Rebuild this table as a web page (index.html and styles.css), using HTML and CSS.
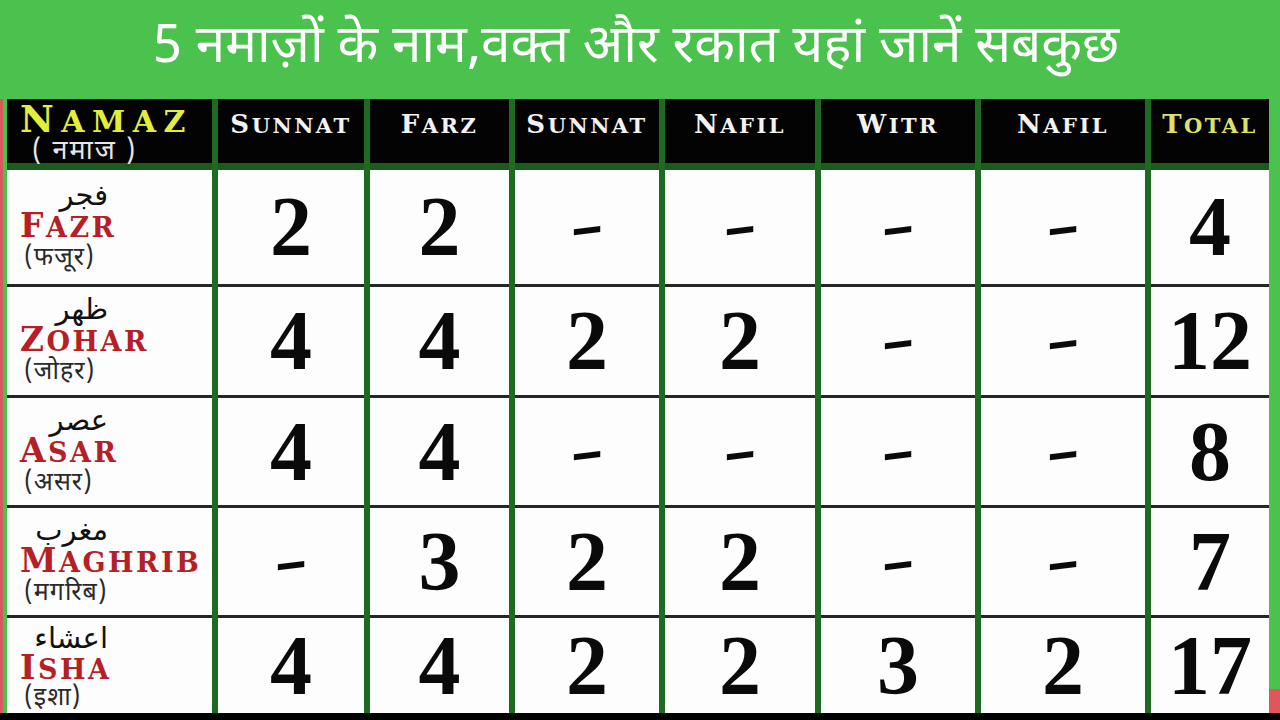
FILE: index.html
```html
<!DOCTYPE html>
<html lang="hi">
<head>
<meta charset="utf-8">
<title>5 नमाज़ों के नाम</title>
<link rel="stylesheet" href="styles.css">
</head>
<body>
<div class="page">
  <header class="title">
    <h1>5 नमाज़ों के नाम,वक्त और रकात यहां जानें सबकुछ</h1>
  </header>
  <div class="board">
    <div class="strip-left"></div>
    <div class="grid">
      <div class="hcell hname">
        <span class="namaz"><span class="cap">N</span>AMAZ</span>
        <span class="namaz-hi">( नमाज )</span>
      </div>
      <div class="hcell"><span class="htext"><span class="cap">S</span>UNNAT</span></div>
      <div class="hcell"><span class="htext"><span class="cap">F</span>ARZ</span></div>
      <div class="hcell"><span class="htext"><span class="cap">S</span>UNNAT</span></div>
      <div class="hcell"><span class="htext"><span class="cap">N</span>AFIL</span></div>
      <div class="hcell"><span class="htext"><span class="cap">W</span>ITR</span></div>
      <div class="hcell"><span class="htext"><span class="cap">N</span>AFIL</span></div>
      <div class="hcell"><span class="htext total"><span class="cap">T</span>OTAL</span></div>

      <div class="cell name">
        <span class="ar" lang="ar">فجر</span>
        <span class="en"><span class="cap">F</span>AZR</span>
        <span class="hi">(फजूर)</span>
      </div>
      <div class="cell"><span class="num">2</span></div>
      <div class="cell"><span class="num">2</span></div>
      <div class="cell"><span class="dash">–</span></div>
      <div class="cell"><span class="dash">–</span></div>
      <div class="cell"><span class="dash">–</span></div>
      <div class="cell"><span class="dash">–</span></div>
      <div class="cell"><span class="num">4</span></div>

      <div class="cell name">
        <span class="ar" lang="ar">ظهر</span>
        <span class="en"><span class="cap">Z</span>OHAR</span>
        <span class="hi">(जोहर)</span>
      </div>
      <div class="cell"><span class="num">4</span></div>
      <div class="cell"><span class="num">4</span></div>
      <div class="cell"><span class="num">2</span></div>
      <div class="cell"><span class="num">2</span></div>
      <div class="cell"><span class="dash">–</span></div>
      <div class="cell"><span class="dash">–</span></div>
      <div class="cell"><span class="num">12</span></div>

      <div class="cell name">
        <span class="ar" lang="ar">عصر</span>
        <span class="en"><span class="cap">A</span>SAR</span>
        <span class="hi">(असर)</span>
      </div>
      <div class="cell"><span class="num">4</span></div>
      <div class="cell"><span class="num">4</span></div>
      <div class="cell"><span class="dash">–</span></div>
      <div class="cell"><span class="dash">–</span></div>
      <div class="cell"><span class="dash">–</span></div>
      <div class="cell"><span class="dash">–</span></div>
      <div class="cell"><span class="num">8</span></div>

      <div class="cell name">
        <span class="ar" lang="ar">مغرب</span>
        <span class="en"><span class="cap">M</span>AGHRIB</span>
        <span class="hi">(मगरिब)</span>
      </div>
      <div class="cell"><span class="dash">–</span></div>
      <div class="cell"><span class="num">3</span></div>
      <div class="cell"><span class="num">2</span></div>
      <div class="cell"><span class="num">2</span></div>
      <div class="cell"><span class="dash">–</span></div>
      <div class="cell"><span class="dash">–</span></div>
      <div class="cell"><span class="num">7</span></div>

      <div class="cell name last">
        <span class="ar" lang="ar">اعشاء</span>
        <span class="en"><span class="cap">I</span>SHA</span>
        <span class="hi">(इशा)</span>
      </div>
      <div class="cell last"><span class="num">4</span></div>
      <div class="cell last"><span class="num">4</span></div>
      <div class="cell last"><span class="num">2</span></div>
      <div class="cell last"><span class="num">2</span></div>
      <div class="cell last"><span class="num">3</span></div>
      <div class="cell last"><span class="num">2</span></div>
      <div class="cell last"><span class="num">17</span></div>
    </div>
    <div class="strip-right"></div>
  </div>
  <div class="bottom"></div>
</div>
</body>
</html>
```

FILE: styles.css
```css
* { box-sizing: border-box; }
html, body { margin: 0; padding: 0; }
body { width: 1280px; height: 720px; overflow: hidden; background: #000; }

.page { width: 1280px; height: 720px; display: flex; flex-direction: column; }

.title {
  height: 99px;
  background: #4cc24e;
  display: flex;
  align-items: center;
  justify-content: center;
}
.title h1 {
  margin: 0;
  padding-right: 8px;
  color: #fff;
  font-family: "Noto Sans Devanagari", "Lohit Devanagari", "Noto Sans", sans-serif;
  font-weight: 400;
  font-size: 53px;
  line-height: 1;
  white-space: nowrap;
}

.board { height: 614px; display: flex; }
.strip-left {
  width: 7px;
  border-left: 3px solid #d9595a;
  background: #4cc24e;
}
.strip-right {
  width: 11px;
  background: linear-gradient(#4cc24e 0, #4cc24e 590px, #e0575a 590px);
}

.grid {
  display: grid;
  grid-template-columns: 205px 146px 139px 144px 150px 154px 164px 118px;
  grid-template-rows: 71px 117px 111px 110px 110px 95px;
  column-gap: 6px;
  background: #1e6a21;
}

.hcell {
  background: #030303;
  border-bottom: 7px solid #1c5a1e;
  display: flex;
  justify-content: center;
  align-items: flex-start;
  padding-top: 12px;
}
.htext {
  color: #f2f2f2;
  font-family: "DejaVu Serif", "Liberation Serif", serif;
  font-weight: 700;
  font-size: 21px;
  letter-spacing: 2.5px;
  line-height: 1;
}
.htext .cap { font-size: 26px; }
.htext.total { color: #d9e36b; }

.hname {
  flex-direction: column;
  align-items: flex-start;
  padding-top: 2px;
  padding-left: 13px;
}
.namaz {
  color: #e1ef3c;
  font-family: "DejaVu Serif", "Liberation Serif", serif;
  font-weight: 700;
  font-size: 30px;
  letter-spacing: 7.5px;
  line-height: 38px;
  white-space: nowrap;
}
.namaz .cap { font-size: 37px; }
.namaz-hi {
  color: #e6e6e6;
  font-family: "Noto Sans Devanagari", "Lohit Devanagari", "Noto Serif Devanagari", "Noto Sans", sans-serif;
  font-size: 27px;
  line-height: 24px;
  padding-left: 12px;
  letter-spacing: 2px;
  white-space: pre;
}

.cell {
  background: #fdfdfd;
  border-bottom: 3px solid #262626;
  display: flex;
  justify-content: center;
  align-items: center;
}
.cell.last { border-bottom: none; }

.num {
  font-family: "Liberation Serif", "DejaVu Serif", serif;
  font-weight: 700;
  font-size: 84px;
  line-height: 1;
  color: #0a0a0a;
}
.dash {
  font-family: "DejaVu Sans", sans-serif;
  font-weight: 700;
  font-size: 60px;
  line-height: 1;
  color: #0a0a0a;
  transform: skewY(-7deg) scale(1.12, 0.8);
}

.name {
  flex-direction: column;
  justify-content: center;
  align-items: flex-start;
  padding-left: 13px;
}
.name.last { justify-content: flex-start; padding-top: 6px; }
.ar {
  width: 88px;
  text-align: right;
  direction: rtl;
  font-family: "DejaVu Sans", "Noto Sans Arabic", sans-serif;
  font-size: 29px;
  line-height: 30px;
  color: #111;
}
.last .ar { line-height: 28px; }
.en {
  color: #b51f25;
  font-family: "DejaVu Serif", "Liberation Serif", serif;
  font-weight: 700;
  font-size: 27px;
  letter-spacing: 2.5px;
  line-height: 32px;
}
.en .cap { font-size: 33px; }
.hi {
  color: #2a2a2a;
  font-family: "Noto Sans Devanagari", "Lohit Devanagari", "Noto Serif Devanagari", "Noto Sans", sans-serif;
  font-size: 25px;
  line-height: 30px;
  padding-left: 4px;
  letter-spacing: 1px;
}
.last .hi { line-height: 26px; }

.bottom { height: 7px; background: #000; }
```
